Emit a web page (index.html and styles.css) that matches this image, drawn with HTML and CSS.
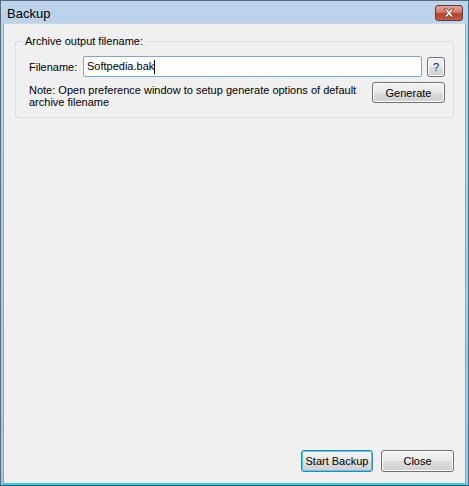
FILE: index.html
```html
<!DOCTYPE html>
<html>
<head>
<meta charset="utf-8">
<link rel="stylesheet" href="styles.css">
</head>
<body>
<div class="window">
  <div class="titlebar">
    <span class="title">Backup</span>
    <button class="close-x" aria-label="Close">
      <svg width="14" height="10" viewBox="0 0 14 10"><path d="M2 1 L5 1 L7 3.3 L9 1 L12 1 L8.6 5 L12 9 L9 9 L7 6.7 L5 9 L2 9 L5.4 5 Z" fill="#fff" stroke="#6a2a20" stroke-width="0.8"/></svg>
    </button>
  </div>
  <div class="client">
    <fieldset class="group">
      <legend>Archive output filename:</legend>
      <div class="row">
        <label class="lbl">Filename:</label>
        <div class="input">Softpedia.bak<span class="caret"></span></div>
        <button class="btn small">?</button>
      </div>
      <div class="row note-row">
        <p class="note">Note: Open preference window to setup generate options of default archive filename</p>
        <button class="btn gen">Generate</button>
      </div>
    </fieldset>
    <div class="spacer"></div>
    <div class="footer">
      <button class="btn foot default">Start Backup</button>
      <button class="btn foot close">Close</button>
    </div>
  </div>
</div>
</body>
</html>
```
FILE: styles.css
```css
html, body {
  margin: 0;
  padding: 0;
  background: #f0f0f0;
}
body {
  font-family: "Liberation Sans", Arial, sans-serif;
  font-size: 11px;
  color: #000;
}
.window {
  width: 469px;
  height: 486px;
  box-sizing: border-box;
  display: flex;
  flex-direction: column;
  background: linear-gradient(#bcd3eb, #a8c3e1);
  border: 1px solid #5a6b80;
  border-right-color: #2a7fa8;
  border-bottom: 1px solid #1f5f80;
}
.titlebar {
  height: 22px;
  display: flex;
  align-items: center;
  justify-content: space-between;
  padding: 0 5px 0 6px;
}
.title {
  font-size: 13px;
  color: #000;
  padding-top: 2px;
}
.close-x {
  width: 28px;
  height: 16px;
  margin-top: 2px;
  padding: 0;
  border: 1px solid #5c3a3a;
  border-radius: 3px;
  background: linear-gradient(#e8a293 0%, #d47c68 45%, #b7402a 55%, #c85c44 100%);
  display: flex;
  align-items: center;
  justify-content: center;
}
.client {
  flex: 1;
  margin: 0 2px 0 2px;
  background: #f0f0f0;
  border: 1px solid #8ea8c4;
  border-top: 1px solid #c9d9ea;
  border-bottom: 2px solid #3ccbe6;
  display: flex;
  flex-direction: column;
  padding: 11px 11px 11px 11px;
}
.group {
  margin: 0;
  border: 1px solid #d5dfe5;
  border-radius: 3px;
  padding: 9px 8px 8px 13px;
  height: 64px;
}
.group legend {
  padding: 0 2px;
  margin-left: -6px;
  color: #000;
}
.row {
  display: flex;
  align-items: center;
}
.lbl {
  width: 54px;
}
.input {
  flex: 1;
  height: 21px;
  box-sizing: border-box;
  border: 1px solid #7fa8cf;
  border-radius: 2px;
  background: #fff;
  padding: 2px 3px;
  line-height: 15px;
  display: flex;
  align-items: center;
}
.caret {
  display: inline-block;
  width: 1px;
  height: 14px;
  background: #000;
}
.btn {
  font-family: inherit;
  font-size: 11px;
  color: #000;
  border: 1px solid #707070;
  border-radius: 3px;
  background: linear-gradient(#f2f2f2 0%, #ebebeb 48%, #dddddd 52%, #cfcfcf 100%);
  padding: 0;
  box-shadow: inset 0 0 0 1px #fcfcfc;
}
.small {
  width: 18px;
  height: 20px;
  margin-left: 5px;
  color: #101060;
}
.note-row {
  margin-top: 5px;
  align-items: flex-start;
}
.note {
  margin: 0;
  flex: 1;
  line-height: 12px;
  padding-top: 2px;
}
.gen {
  width: 73px;
  height: 21px;
  margin-left: 14px;
}
.spacer {
  flex: 1;
}
.footer {
  display: flex;
  justify-content: flex-end;
  gap: 8px;
}
.foot {
  width: 72px;
  height: 22px;
}
.foot.close {
  width: 73px;
}
.default {
  border-color: #3c7fb1;
  box-shadow: inset 0 0 0 1px #48d0f5;
}
```
